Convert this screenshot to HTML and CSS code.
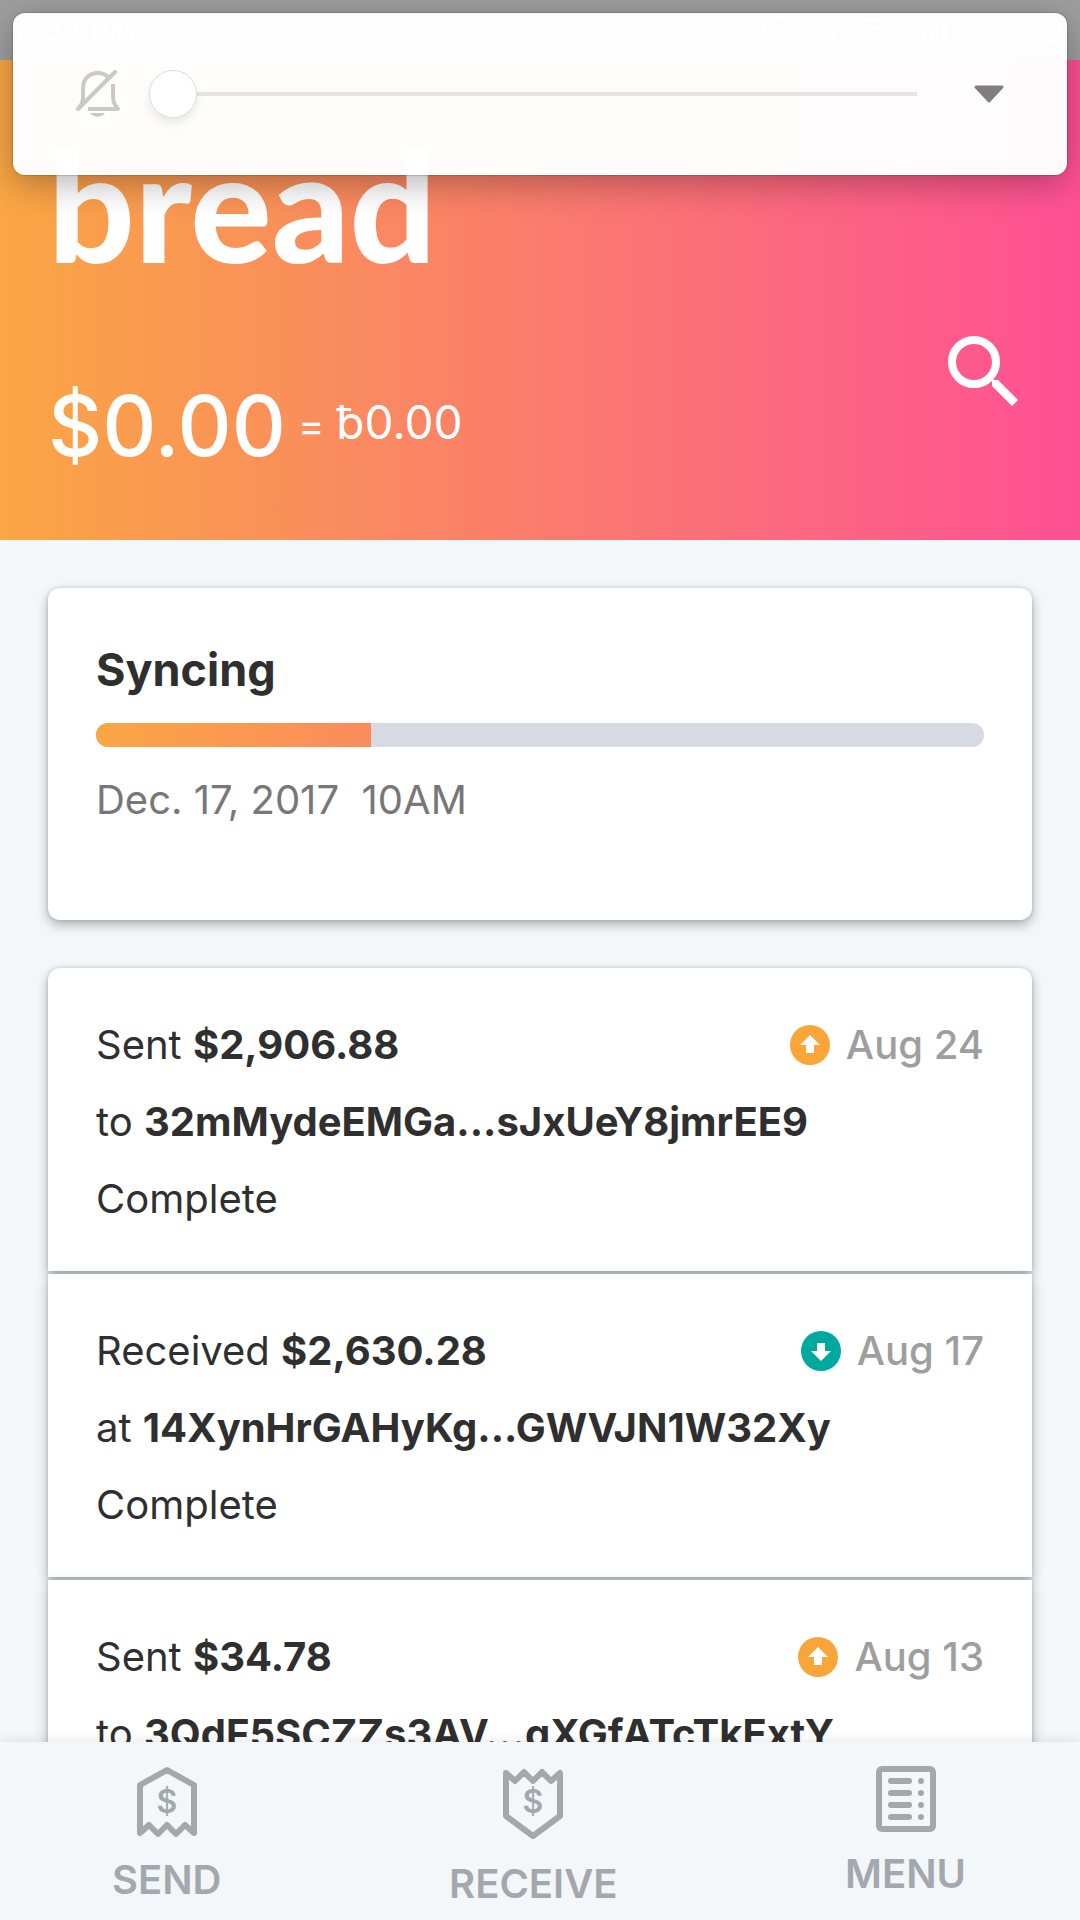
FILE: index.html
```
<!DOCTYPE html>
<html lang="en">
<head>
  <meta charset="UTF-8">
  <meta name="viewport" content="width=device-width, initial-scale=1">
  <title>Bread Wallet</title>
  <link rel="stylesheet" href="styles.css">
</head>
<body>
  <div class="app">
    <!-- System status bar -->
    <div class="status-bar">
      <span>8:34 PM</span>
      <svg class="status-icons" viewBox="0 0 354 32" fill="none" stroke="#fff" stroke-width="3">
        <path d="M4 25h6M16 25h6M28 25h6" stroke-width="6"/>
        <circle cx="67" cy="16" r="13"/>
        <path d="M104 26c4-6 3-20 11-22 8 2 7 16 11 22zM100 28l24-25"/>
        <path d="M147 12c10-9 24-9 34 0M152 18c7-6 17-6 24 0M158 23c4-3 8-3 12 0"/>
        <path d="M208 29v-5M214 29V19M221 29V14M228 29V9M235 29V4" stroke-width="5"/>
        <path d="M264 3l-7 14h6l-3 12 9-15h-7z" fill="#fff" stroke-width="1"/>
        <rect x="281" y="4" width="69" height="24" rx="12"/>
      </svg>
    </div>

    <!-- Header -->
    <header class="header">
      <h1 class="logo">bread</h1>
      <div class="balance">
        <span class="balance-main">$0.00</span>
        <span class="balance-equals">=</span>
        <span class="balance-bits">ƀ0.00</span>
      </div>
      <button class="search" aria-label="Search">
        <svg width="72" height="72" viewBox="0 0 72 72">
          <circle cx="26" cy="27" r="22" fill="none" stroke="#fff" stroke-width="8"/>
          <path d="M42 41l4 4h4l20 20-6 6-20-20v-4l-4-4z" fill="#fff"/>
        </svg>
      </button>
    </header>

    <!-- Main Content -->
    <main class="content">
      <section class="card sync">
        <h2 id="sync-title">Syncing</h2>
        <progress value="31" max="100" aria-labelledby="sync-title"></progress>
        <p class="sync-date">Dec. 17, 2017&nbsp; 10AM</p>
      </section>

      <ul class="transactions">
        <li class="card transaction">
          <div class="row">
            <p>Sent <b>$2,906.88</b></p>
            <div class="date">
              <svg width="40" height="40" viewBox="0 0 40 40"><circle cx="20" cy="20" r="20" fill="#faa539"/><path d="M20 10l10 10h-6v8h-8v-8h-6z" fill="#fff"/></svg>
              <span>Aug 24</span>
            </div>
          </div>
          <p>to <b>32mMydeEMGa...sJxUeY8jmrEE9</b></p>
          <p>Complete</p>
        </li>
        <li class="card transaction">
          <div class="row">
            <p>Received <b>$2,630.28</b></p>
            <div class="date">
              <svg width="40" height="40" viewBox="0 0 40 40"><circle cx="20" cy="20" r="20" fill="#00a99d"/><path d="M20 30l10-10h-6v-8h-8v8h-6z" fill="#fff"/></svg>
              <span>Aug 17</span>
            </div>
          </div>
          <p>at <b>14XynHrGAHyKg...GWVJN1W32Xy</b></p>
          <p>Complete</p>
        </li>
        <li class="card transaction">
          <div class="row">
            <p>Sent <b>$34.78</b></p>
            <div class="date">
              <svg width="40" height="40" viewBox="0 0 40 40"><circle cx="20" cy="20" r="20" fill="#faa539"/><path d="M20 10l10 10h-6v8h-8v-8h-6z" fill="#fff"/></svg>
              <span>Aug 13</span>
            </div>
          </div>
          <p>to <b>3QdF5SCZZs3AV...qXGfATcTkExtY</b></p>
        </li>
      </ul>
    </main>

    <!-- Bottom navigation -->
    <nav class="bottom-nav">
      <button>
        <svg width="60" height="72" viewBox="0 0 60 72" fill="none" stroke="#a3a8ab" stroke-width="6" stroke-linejoin="round">
          <path d="M3 19L30 4l27 15v48l-9-8-9 9-9-9-9 9-9-9-9 8z"/>
          <text x="30" y="47" class="icon-dollar">$</text>
        </svg>
        <span>SEND</span>
      </button>
      <button>
        <svg width="60" height="76" viewBox="0 0 60 76" fill="none" stroke="#a3a8ab" stroke-width="6" stroke-linejoin="round">
          <path d="M3 7l9 8 9-9 9 9 9-9 9 9 9-8v43L30 70 3 50z"/>
          <text x="30" y="47" class="icon-dollar">$</text>
        </svg>
        <span>RECEIVE</span>
      </button>
      <button>
        <svg width="60" height="66" viewBox="0 0 60 66" fill="none" stroke="#a3a8ab" stroke-width="6" stroke-linecap="round">
          <rect x="3" y="3" width="54" height="60" rx="3"/>
          <path d="M15 15h18M45 15h0M15 27h18M45 27h0M15 39h18M45 39h0M15 51h18M45 51h0"/>
        </svg>
        <span>MENU</span>
      </button>
    </nav>

    <!-- Volume overlay -->
    <div class="volume">
      <svg width="44" height="48" viewBox="0 0 44 48" fill="none" stroke="#c9c9c8" stroke-width="4" stroke-linecap="round" stroke-linejoin="round">
        <path d="M2 39L39 2"/>
        <path d="M2 39c4-5 5-7 5-12v-9C7 9 13 3 22 3c4 0 7 1 10 4"/>
        <path d="M37 14v11c0 7 1 9 5 14H12" stroke-linecap="butt"/>
        <path d="M14 43h15c-4 5-11 5-15 0z" fill="#c9c9c8" stroke="none"/>
      </svg>
      <input type="range" min="0" max="100" value="0" aria-label="Volume">
      <button aria-label="More volume settings">
        <svg width="30" height="18" viewBox="0 0 30 18"><path d="M2 2h26L15 16z" fill="#7f7f7f" stroke="#7f7f7f" stroke-width="3" stroke-linejoin="round"/></svg>
      </button>
    </div>
  </div>
</body>
</html>
```

FILE: styles.css
```
/* Reset defaults */
* { margin: 0; padding: 0; box-sizing: border-box; }

body {
  background-color: #f3f7fa;
  color: #2f2f2f;
  font-family: Inter, "Open Sans", sans-serif;
  font-size: 40px;
}
button {
  border: none;
  background: none;
  font: inherit;
  color: inherit;
  cursor: pointer;
}
svg { display: block; flex: none; }

.app {
  position: relative;
  display: flex;
  flex-direction: column;
  height: 100vh;
  overflow: hidden;
}

/* Status bar */
.status-bar {
  display: flex;
  justify-content: space-between;
  align-items: center;
  height: 60px;
  flex: none;
  padding: 0 16px;
  background: #9f9f9f;
  color: #fff;
  font-size: 30px;
  font-weight: 500;
}
.status-icons { height: 32px; width: 354px; }

/* Header */
.header {
  position: relative;
  flex: none;
  padding: 52px 48px 60px;
  background: linear-gradient(to right, #faa644, #fa7c6d 50%, #ff5094);
  color: #fff;
}
.logo {
  font-family: Lato, sans-serif;
  font-size: 152px;
  font-weight: 900;
  line-height: 184px;
}
.balance {
  display: flex;
  align-items: flex-start;
  gap: 12px;
  margin-top: 76px;
  line-height: 108px;
}
.balance-main {
  font-size: 84px;
  font-weight: 500;
}
.balance-equals { font-size: 40px; }
.balance-bits {
  font-size: 46px;
  line-height: 100px;
}
.search {
  position: absolute;
  right: 60px;
  top: 275px;
}

/* Cards */
.content {
  flex: 1;
  min-height: 0;
  overflow: hidden;
  padding: 48px;
}
.card {
  background: #fff;
  box-shadow: 0 5px 12px rgba(0, 0, 0, 0.28), 0 0 4px rgba(0, 0, 0, 0.15);
}
.sync {
  padding: 52px 48px 90px;
  border-radius: 12px;
  margin-bottom: 48px;
}
.sync h2 {
  font-size: 45px;
  line-height: 60px;
}
.sync progress {
  display: block;
  appearance: none;
  width: 100%;
  height: 24px;
  margin: 23px 0;
  border-radius: 12px;
  overflow: hidden;
}
.sync progress::-webkit-progress-bar { background: #d6dae3; }
.sync progress::-webkit-progress-value {
  background: linear-gradient(to right, #faa644, #fb8b5d);
}
.sync-date {
  color: #777;
  line-height: 60px;
}

/* Transactions */
.transactions { list-style: none; }
.transaction {
  padding: 38px 48px 34px;
  margin-bottom: 3px;
  line-height: 77px;
}
.transaction:first-child { border-radius: 12px 12px 0 0; }
.row {
  display: flex;
  justify-content: space-between;
}
.date {
  display: flex;
  align-items: center;
  gap: 16px;
  color: #9e9e9e;
  font-weight: 500;
}

/* Bottom navigation */
.bottom-nav {
  position: relative;
  flex: none;
  display: flex;
  justify-content: space-between;
  align-items: flex-start;
  padding: 24px 114px 10px 112px;
  background: #f3f7fa;
  box-shadow: 0 0 12px rgba(0, 0, 0, 0.12);
  color: #a4a8ae;
  font-weight: 600;
}
.bottom-nav button {
  display: flex;
  flex-direction: column;
  align-items: center;
  gap: 16px;
  line-height: 52px;
}
.icon-dollar {
  fill: #a3a8ab;
  stroke: none;
  font-size: 32px;
  font-weight: 600;
  text-anchor: middle;
}

/* Volume overlay */
.volume {
  position: absolute;
  top: 13px;
  left: 13px;
  right: 13px;
  display: flex;
  align-items: center;
  height: 162px;
  padding: 0 63px;
  border-radius: 12px;
  background: rgba(255, 255, 255, 0.98);
  box-shadow: 0 0 1px 1px rgba(0, 0, 0, 0.15), 0 8px 36px rgba(0, 0, 0, 0.3);
}
.volume input {
  appearance: none;
  flex: 1;
  min-width: 0;
  height: 48px;
  margin: 0 57px 0 29px;
  background: linear-gradient(#e4e4e3, #e4e4e3) 24px center / 100% 4px no-repeat;
}
.volume input::-webkit-slider-thumb {
  appearance: none;
  width: 48px;
  height: 48px;
  border: 1px solid #ddd;
  border-radius: 50%;
  background: #fff;
  box-shadow: 0 6px 10px rgba(0, 0, 0, 0.08);
}
```
